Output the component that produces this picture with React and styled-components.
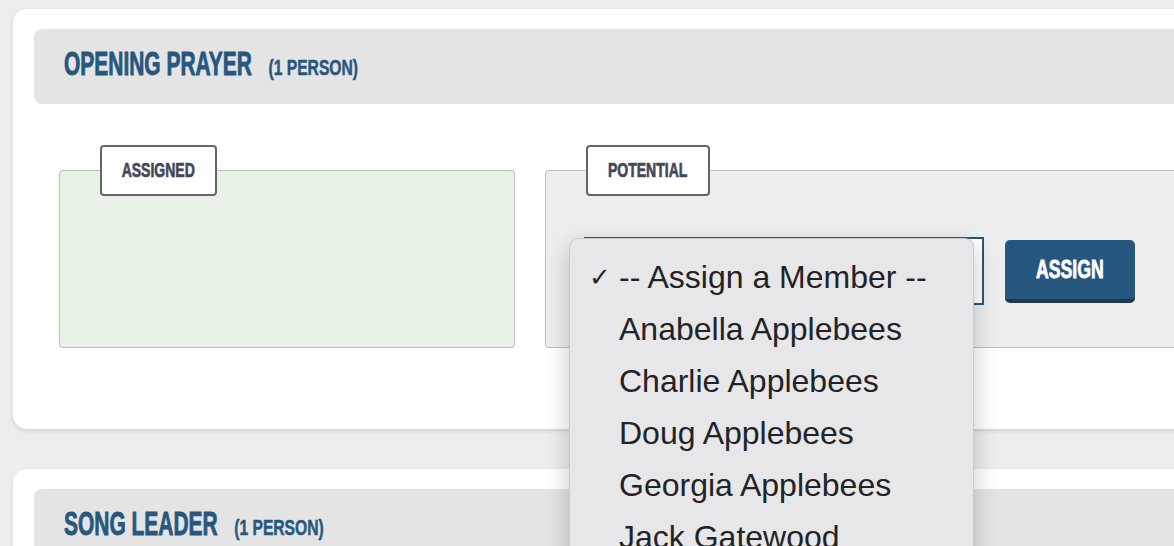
import React from 'react'
import styled, { createGlobalStyle } from 'styled-components'

const GlobalStyle = createGlobalStyle`
  body {
    margin: 0;
    background: #ededed;
    overflow: hidden;
    font-family: "Liberation Sans", Arial, sans-serif;
  }
`

// no condensed face is installed, so the DIN-like headings are narrowed by hand
// and the stroke makes up for the weight the squeeze takes away
const Squeeze = styled.span`
  display: inline-block;
  white-space: nowrap;
  transform: scaleX(${p => p.$x || 0.68});
  transform-origin: ${p => p.$origin || 'center'} center;
  -webkit-text-stroke: ${p => p.$stroke ?? 0.7}px currentColor;
`

const Page = styled.div`
  width: 1320px;
  padding: 9px 0 0 13px;
  display: flex;
  flex-direction: column;
  gap: 40px;
`

const Card = styled.section`
  background: #fff;
  border-radius: 14px;
  padding: 20px 21px 81px;
  box-shadow: 0 2px 4px rgba(0, 0, 0, 0.12);
`

const Header = styled.div`
  height: 75px;
  box-sizing: border-box;
  padding: 0 30px 5px;
  background: #e4e4e4;
  border-radius: 8px;
  display: flex;
  align-items: center;
`

const HeadingText = styled(Squeeze)`
  display: inline-flex;
  align-items: baseline;
  color: #27577e;
  font-weight: 700;
  text-transform: uppercase;
`

const Title = styled.h2`
  margin: 0;
  font-size: 33px;
  font-weight: 700;
  line-height: 1;
`

const Count = styled(Squeeze)`
  margin-left: 26px;
  font-size: 22px;
`

const Body = styled.div`
  display: flex;
  gap: 30px;
  padding: 0 25px;
  margin-top: 41px;
`

const Group = styled.fieldset`
  margin: 0;
  padding: 0;
  min-width: 0;
  box-sizing: border-box;
  border: 1.5px solid #bdbdbd;
  border-radius: 4px;
  background: ${p => (p.$tone === 'green' ? '#e8f2e7' : '#eeeeee')};
  ${p => (p.$width ? `width: ${p.$width}px; flex: none;` : 'flex: 1;')}
`

const Legend = styled.legend`
  margin-left: 40px;
  padding: 0;
  width: ${p => p.$width}px;
  height: 51px;
  box-sizing: border-box;
  display: flex;
  align-items: center;
  justify-content: center;
  background: #fff;
  border: 2px solid #666;
  border-radius: 4px;
  font-weight: 700;
  font-size: 20px;
  color: #45475a;
  text-transform: uppercase;
`

const Controls = styled.div`
  display: flex;
  align-items: center;
  gap: 21px;
  padding: 41px 38px 42px;
`

const SelectWrap = styled.div`
  position: relative;
`

const SelectBox = styled.div`
  width: 400px;
  height: 68px;
  box-sizing: border-box;
  border: 2px solid #26577e;
  background: #fff;
  display: flex;
  align-items: center;
  padding: 0 14px;
  font-size: 26px;
  color: #222;
`

const Menu = styled.ul`
  position: absolute;
  top: 1px;
  left: -15px;
  width: 405px;
  margin: 0;
  padding: 12px 0;
  list-style: none;
  background: #e7e7e9;
  border: 1px solid rgba(0, 0, 0, 0.12);
  border-radius: 9px;
  box-shadow: 0 8px 24px rgba(0, 0, 0, 0.22);
  z-index: 2;
  box-sizing: border-box;
`

const Item = styled.li`
  position: relative;
  height: 52px;
  line-height: 52px;
  padding-left: 49px;
  font-size: 32px;
  color: #232325;
  white-space: nowrap;
`

const Check = styled.span`
  position: absolute;
  left: 19px;
  font-size: 26px;
`

const AssignButton = styled.button`
  width: 130px;
  height: 63px;
  padding: 0;
  border: 0;
  border-bottom: 4px solid #1b3a52;
  border-radius: 5px;
  background: #26577e;
  color: #fff;
  font-family: "Liberation Sans", Arial, sans-serif;
  font-weight: 700;
  font-size: 26px;
  text-transform: uppercase;
  cursor: pointer;
`

const members = [
  'Anabella Applebees',
  'Charlie Applebees',
  'Doug Applebees',
  'Georgia Applebees',
  'Jack Gatewood',
  'Kelly Gatewood',
  'Martin Gatewood',
]

function MemberMenu () {
  return (
    <Menu>
      <Item><Check>✓</Check>-- Assign a Member --</Item>
      {members.map(name => <Item key={name}>{name}</Item>)}
    </Menu>
  )
}

function Role ({ title, count, open }) {
  return (
    <Card>
      <Header>
        <HeadingText $x={0.635} $origin='left' $stroke={0.9}>
          <Title>{title}</Title>
          <Count $x={1.12} $origin='left' $stroke={0.5}>({count} person)</Count>
        </HeadingText>
      </Header>
      <Body>
        <Group $tone='green' $width={456}>
          <Legend $width={117}><Squeeze $x={0.7}>Assigned</Squeeze></Legend>
        </Group>
        <Group>
          <Legend $width={124}><Squeeze $x={0.7}>Potential</Squeeze></Legend>
          <Controls>
            <SelectWrap>
              <SelectBox>-- Assign a Member --</SelectBox>
              {open && <MemberMenu />}
            </SelectWrap>
            <AssignButton><Squeeze $x={0.68} $stroke={0.8}>Assign</Squeeze></AssignButton>
          </Controls>
        </Group>
      </Body>
    </Card>
  )
}

export default function App () {
  return (
    <Page>
      <GlobalStyle />
      <Role title='Opening Prayer' count={1} open />
      <Role title='Song Leader' count={1} />
    </Page>
  )
}
